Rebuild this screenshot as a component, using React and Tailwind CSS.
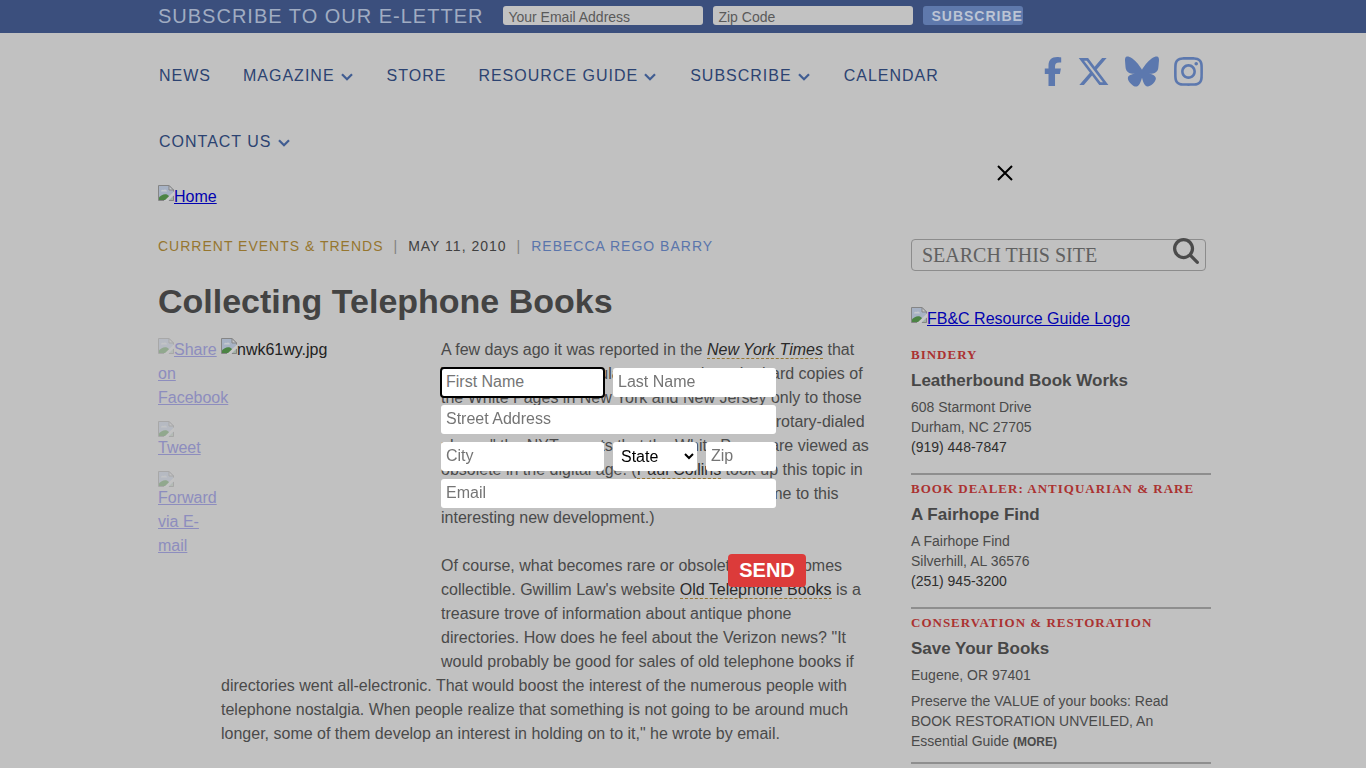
import React from "react";
import { FaFacebookF, FaXTwitter, FaBluesky, FaInstagram, FaMagnifyingGlass } from "react-icons/fa6";

function MissingImage({ className = "" }) {
  return (
    <svg viewBox="0 0 16 16" width="16" height="16" aria-hidden="true" className={`inline-block shrink-0 ${className}`}>
      <path d="M0.5 0.5H11L15.5 5V15.5H0.5Z" fill="#a7b2c4" />
      <path d="M3 6.5a1.7 1.7 0 0 1 2.6-1.4A2 2 0 0 1 9 6.5Z" fill="#c6c9ce" />
      <path d="M1 15v-2.5C3 10 6 8.500 9 9.500L11 11V15Z" fill="#4c8444" />
      <path d="M16 6.500V10L10 16H6Z" fill="#c8c8c8" />
      <path d="M10.500 16L16 10.500V16Z" fill="#a3b3a3" />
      <path d="M0.5 15.5V0.5H11L15.5 5V6.500M15.5 11V15.5H11M6 15.5H0.5" fill="none" stroke="#858585" />
      <path d="M11 0.5V5H15.5Z" fill="#c4c6ca" stroke="#858585" />
    </svg>
  );
}

function Chevron() {
  return (
    <svg viewBox="0 0 12 8" width="12" height="8" aria-hidden="true" className="ml-[6px] mr-[2px] mt-[2px]">
      <path d="M1 1.200L6 6.200L11 1.200" fill="none" stroke="#405d92" strokeWidth="2.200" />
    </svg>
  );
}

const NAV = [
  ["NEWS", false],
  ["MAGAZINE", true],
  ["STORE", false],
  ["RESOURCE GUIDE", true],
  ["SUBSCRIBE", true],
  ["CALENDAR", false],
  ["CONTACT US", true],
];

const SOCIAL = [
  ["Facebook", FaFacebookF, "h-[29px] w-[18px]"],
  ["X", FaXTwitter, "h-[33px] w-[33px]"],
  ["Bluesky", FaBluesky, "h-[33px] w-[34px]"],
  ["Instagram", FaInstagram, "h-[33px] w-[29px]"],
];

const LISTINGS = [
  { category: "BINDERY", name: "Leatherbound Book Works", lines: ["608 Starmont Drive", "Durham, NC 27705"], phone: "(919) 448-7847" },
  { category: "BOOK DEALER: ANTIQUARIAN & RARE", name: "A Fairhope Find", lines: ["A Fairhope Find", "Silverhill, AL 36576"], phone: "(251) 945-3200" },
  {
    category: "CONSERVATION & RESTORATION",
    name: "Save Your Books",
    lines: ["Eugene, OR 97401"],
    text: "Preserve the VALUE of your books: Read BOOK RESTORATION UNVEILED, An Essential Guide",
  },
];

const field = "h-[29px] rounded-[3px] bg-white px-[5px] pb-[2px] text-[16px] text-black placeholder:text-[#757575]";
const barField = "h-[19px] w-[200px] rounded-[3px] bg-[#c2c2c2] px-[5px] pt-[3px] text-[14px] leading-[16px] text-black placeholder:text-[#5a5a5a]";
const textLink = "border-b border-dashed border-[#96762f] text-[#2a2a2a]";

function SubscribeBar() {
  return (
    <div className="bg-[#3b4f7d]">
      <form className="mx-auto flex h-[33px] max-w-[1056px] items-center pb-[2px] pl-[3px]">
        <span className="mr-[20px] whitespace-nowrap text-[20px] leading-[30px] tracking-[1px] text-[#a0acc2]">SUBSCRIBE TO OUR E-LETTER</span>
        <input type="email" aria-label="Your Email Address" placeholder="Your Email Address" className={barField} />
        <input type="text" aria-label="Zip Code" placeholder="Zip Code" className={`ml-[10px] ${barField}`} />
        <button type="button" className="ml-[10px] h-[19px] w-[100px] rounded-[3px] bg-[#5f79ac] pl-[8px] pt-[2px] text-left text-[14px] font-bold leading-[17px] tracking-[1px] text-[#bcc4d4]">SUBSCRIBE</button>
      </form>
    </div>
  );
}

function Header() {
  return (
    <header className="mx-auto flex max-w-[1056px] items-start justify-between pl-[4px] pr-[8px] pt-[10px]">
      <nav className="flex max-w-[860px] flex-wrap gap-x-[32px]">
        {NAV.map(([label, menu]) => (
          <a key={label} href="#" className="flex h-[66px] items-center whitespace-nowrap text-[16px] tracking-[1px] text-[#2c4371]">
            {label}
            {menu && <Chevron />}
          </a>
        ))}
      </nav>
      <div className="flex items-center gap-[15px] pt-[12px] text-[#5c78ae]">
        {SOCIAL.map(([name, Icon, size]) => (
          <a key={name} href="#" aria-label={name}>
            <Icon className={size} />
          </a>
        ))}
      </div>
    </header>
  );
}

function Share() {
  return (
    <ul className="flex w-[63px] shrink-0 flex-col gap-[11px] text-[#8d8dbe] underline">
      <li>
        <a href="#" className="block"><MissingImage className="align-top opacity-40" />Share on Facebook</a>
      </li>
      <li>
        <a href="#" className="block">
          <span className="block h-[15px]"><MissingImage className="align-top opacity-40" /></span>
          Tweet
        </a>
      </li>
      <li>
        <a href="#" className="block">
          <span className="block h-[15px]"><MissingImage className="align-top opacity-40" /></span>
          Forward via E-mail
        </a>
      </li>
    </ul>
  );
}

function Article() {
  return (
    <main className="min-w-0 pt-[26px]">
      <p className="flex gap-[10px] text-[14px] leading-[20px] tracking-[1px] text-[#404040]">
        <a href="#" className="text-[#96762f]">CURRENT EVENTS &amp; TRENDS</a>
        <span className="text-[#808080]">|</span>
        <span>MAY 11, 2010</span>
        <span className="text-[#808080]">|</span>
        <a href="#" className="text-[#5a75ab]">REBECCA REGO BARRY</a>
      </p>
      <h1 className="mt-[25px] text-[34px] font-bold leading-[40px] text-[#434343]">Collecting Telephone Books</h1>
      <div className="mt-[17px] flex text-[16px] leading-[24px] text-[#4a4a4a]">
        <Share />
        <div className="w-[650px]">
          <div className="float-left h-[320px] w-[220px] text-[#222222]"><MissingImage className="align-top" />nwk61wy.jpg</div>
          <p>
            A few days ago it was reported in the <a href="#" className={`italic ${textLink}`}>New York Times</a> that Verizon has asked regulators to send out the hard copies of the White Pages in New York and New Jersey only to those customers who request them. "Just like the old rotary-dialed phone," the NYT reports that the White Pages are viewed as obsolete in the digital age. (<a href="#" className={textLink}>Paul Collins</a> took up this topic in The Believer magazine and one friend alerted me to this interesting new development.)
          </p>
          <p className="mt-6">
            Of course, what becomes rare or obsolete also becomes collectible. Gwillim Law's website <a href="#" className={textLink}>Old Telephone Books</a> is a treasure trove of information about antique phone directories. How does he feel about the Verizon news? "It would probably be good for sales of old telephone books if directories went all-electronic. That would boost the interest of the numerous people with telephone nostalgia. When people realize that something is not going to be around much longer, some of them develop an interest in holding on to it," he wrote by email.
          </p>
        </div>
      </div>
    </main>
  );
}

function Sidebar() {
  return (
    <aside className="pt-[29px]">
      <form className="mr-[5px] flex h-[32px] items-start rounded-[4px] border border-[#8c8c8c] pl-[10px] pr-[6px]">
        <input type="text" aria-label="Search this site" placeholder="SEARCH THIS SITE" className="h-[31px] min-w-0 flex-1 bg-transparent font-['Liberation_Serif',serif] text-[20px] placeholder:text-[#606060]" />
        <button type="button" aria-label="Search" className="-mt-[2px]"><FaMagnifyingGlass className="h-[26px] w-[26px] text-[#4b4b4b]" /></button>
      </form>
      <a href="#" className="mt-[36px] flex items-start text-[16px] leading-[24px] text-[#0202b0] underline"><MissingImage />FB&amp;C Resource Guide Logo</a>
      <div className="mt-[8px] border-b-2 border-[#8e8e8e]">
        {LISTINGS.map((item, index) => (
          <section key={item.name} className={index ? "border-t-2 border-[#8e8e8e] pb-[10px] pt-[6px]" : "pb-[10px] pt-[8px]"}>
            <h3 className="whitespace-nowrap font-['Liberation_Serif',serif] text-[13px] font-bold leading-[16px] tracking-[1px] text-[#ab3231]">{item.category}</h3>
            <h4 className="mt-[6px] text-[17px] font-bold leading-[24px] text-[#474747]">{item.name}</h4>
            <div className="mb-[6px] mt-[4px] text-[14px] leading-[20px] text-[#4a4a4a]">
              {item.lines.map((line) => <p key={line}>{line}</p>)}
              {item.phone && <a href="#" className="block text-[#2e2e2e]">{item.phone}</a>}
            </div>
            {item.text && (
              <p className="pr-[30px] text-[14px] leading-[20px] text-[#4a4a4a]">
                {item.text} <a href="#" className="text-[12px] font-bold">(MORE)</a>
              </p>
            )}
          </section>
        ))}
      </div>
    </aside>
  );
}

function SignupDialog() {
  return (
    <div role="dialog" aria-label="Sign up" className="fixed inset-x-0 top-[149px] mx-auto w-[684px]">
      <div className="flex justify-end pr-[12px] pt-[16px]">
        <button type="button" aria-label="Close" className="h-[16px] w-[16px]">
          <svg viewBox="0 0 16 16" width="16" height="16"><path d="M1 1L15 15M15 1L1 15" stroke="#000" strokeWidth="2" /></svg>
        </button>
      </div>
      <form className="ml-[100px] mt-[187px] flex w-[335px] flex-col gap-[8px]">
        <div className="grid grid-cols-2 gap-[9px]">
          <input type="text" aria-label="First Name" placeholder="First Name" className={`min-w-0 outline-2 -outline-offset-1 outline-black ${field}`} />
          <input type="text" aria-label="Last Name" placeholder="Last Name" className={`min-w-0 ${field}`} />
        </div>
        <input type="text" aria-label="Street Address" placeholder="Street Address" className={field} />
        <div className="grid grid-cols-2 gap-[9px]">
          <input type="text" aria-label="City" placeholder="City" className={`min-w-0 ${field}`} />
          <div className="flex min-w-0 gap-[9px]">
            <select aria-label="State" className="h-[29px] w-[84px] shrink-0 rounded-[3px] bg-white pl-[4px] text-[16px] text-black">
              <option>State</option>
            </select>
            <input type="text" aria-label="Zip" placeholder="Zip" className={`w-0 flex-1 ${field}`} />
          </div>
        </div>
        <input type="email" aria-label="Email" placeholder="Email" className={field} />
        <button type="button" className="-mr-[30px] mt-[38px] h-[33px] w-[78px] self-end rounded-[4px] bg-[#dc3b3a] pb-[2px] text-[20px] font-bold text-white">SEND</button>
      </form>
    </div>
  );
}

export default function App() {
  return (
    <div className="min-h-screen bg-[#c1c1c1] font-['Liberation_Sans',Arial,sans-serif]">
      <SubscribeBar />
      <Header />
      <div className="mx-auto max-w-[1056px] pl-[3px]">
        <a href="#" className="mt-[10px] flex w-fit items-start text-[16px] leading-[24px] text-[#0202b0] underline"><MissingImage />Home</a>
        <div className="mt-px grid grid-cols-[minmax(0,1fr)_300px] gap-[40px]">
          <Article />
          <Sidebar />
        </div>
      </div>
      <SignupDialog />
    </div>
  );
}
